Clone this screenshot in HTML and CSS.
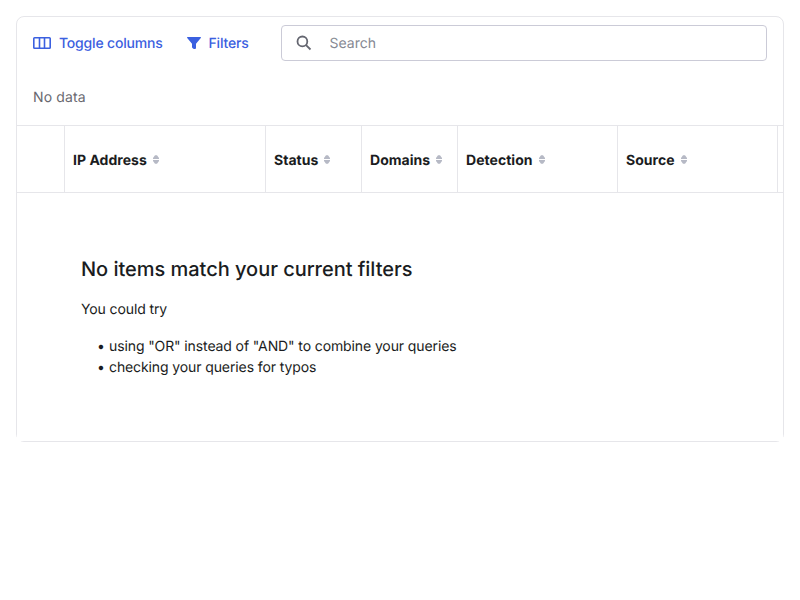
FILE: index.html
```html
<!DOCTYPE html>
<html lang="en">
<head>
<meta charset="utf-8">
<title>Items</title>
<link rel="stylesheet" href="styles.css">
</head>
<body>
<svg class="defs" width="0" height="0"><symbol id="sort" viewBox="0 0 6 9"><path d="M2 .2h2L6 3v1H0V3ZM2 8.8h2L6 6V5H0v1Z" fill="#b6b9c5" stroke="none"/></symbol></svg>
<main class="card">
  <div class="toolbar">
    <button class="action"><svg width="18" height="12" viewBox="0 0 18 12" fill="none" stroke="currentColor" stroke-width="1.6"><rect x=".8" y=".8" width="16.4" height="10.4" rx=".8"/><path d="M6.5 1v10M11.5 1v10"/></svg><span>Toggle columns</span></button>
    <button class="action"><svg width="14" height="12" viewBox="0 0 14 12" fill="currentColor"><path d="M.6 0h12.8c.5 0 .8.6.4 1L9 6.800V11q0 1-1 1H6.900q-.5 0-.9-.4l-.7-.8Q5 10.500 5 10V6.800L.2 1C-.2.6.1 0 .6 0Z"/></svg><span>Filters</span></button>
    <label class="search"><svg width="16" height="16" viewBox="0 0 16 16" fill="none" stroke="currentColor" stroke-width="1.8"><circle cx="6.4" cy="6.4" r="4.9"/><path d="m9.8 9.8 4.7 4.7"/></svg><input type="text" placeholder="Search"></label>
  </div>
  <p class="count">No data</p>
  <div class="head">
    <div class="cell"></div>
    <div class="cell">IP Address<svg class="sort"><use href="#sort"/></svg></div>
    <div class="cell">Status<svg class="sort"><use href="#sort"/></svg></div>
    <div class="cell">Domains<svg class="sort"><use href="#sort"/></svg></div>
    <div class="cell">Detection<svg class="sort"><use href="#sort"/></svg></div>
    <div class="cell">Source<svg class="sort"><use href="#sort"/></svg></div>
  </div>
  <section class="empty">
    <h2>No items match your current filters</h2>
    <p>You could try</p>
    <ul>
      <li>using "OR" instead of "AND" to combine your queries</li>
      <li>checking your queries for typos</li>
    </ul>
  </section>
</main>
</body>
</html>
```
FILE: styles.css
```css
* { box-sizing: border-box; }
body { margin: 0; padding: 16px; background: #fff; color: #1a1c21; font: 14px/21px Inter, "Liberation Sans", sans-serif; text-rendering: geometricPrecision; }
.defs { position: absolute; }
.card { height: 426px; border: 1px solid #e6e6ea; border-radius: 8px; }
.toolbar { display: flex; align-items: center; height: 52px; padding: 0 16px; }
.action { display: flex; align-items: center; gap: 8px; margin: 0 24px 0 0; padding: 0; border: 0; background: none; color: #3b60e0; font: inherit; font-weight: 500; letter-spacing: -.19px; white-space: nowrap; text-rendering: inherit; }
.search { display: flex; flex: 1; align-items: center; gap: 18px; height: 36px; margin-left: 8px; padding: 0 14px; border: 1px solid #cbcbd7; border-radius: 4px; color: #646670; }
.search input { flex: 1; min-width: 0; padding: 0; border: 0; outline: 0; background: none; font: inherit; text-rendering: inherit; }
.search input::placeholder { color: #858892; opacity: 1; }
.count { margin: 0; padding: 18px 16px 17px; color: #69696f; letter-spacing: .14px; }
.head { display: grid; grid-template-columns: 48px 201px 96px 96px 160px 160px; height: 68px; border: solid #e6e6ea; border-width: 1px 0; }
.cell { display: flex; align-items: center; padding: 2px 8px 0; border-right: 1px solid #e6e6ea; font-weight: 700; white-space: nowrap; letter-spacing: .03px; }
.sort { width: 6px; height: 9px; margin: -2px 0 0 6px; }
.empty { height: 248px; padding: 62px 64px 0; background: #fff; letter-spacing: -.11px; }
.empty h2 { margin: 0 0 16px; font-size: 20px; line-height: 28px; font-weight: 500; letter-spacing: -.03px; }
.empty p { margin: 0 0 16px; }
.empty ul { margin: 0; padding: 0 0 0 28px; list-style: none; }
.empty li::before { content: "•"; display: inline-block; width: 12px; margin-left: -12px; }
```
